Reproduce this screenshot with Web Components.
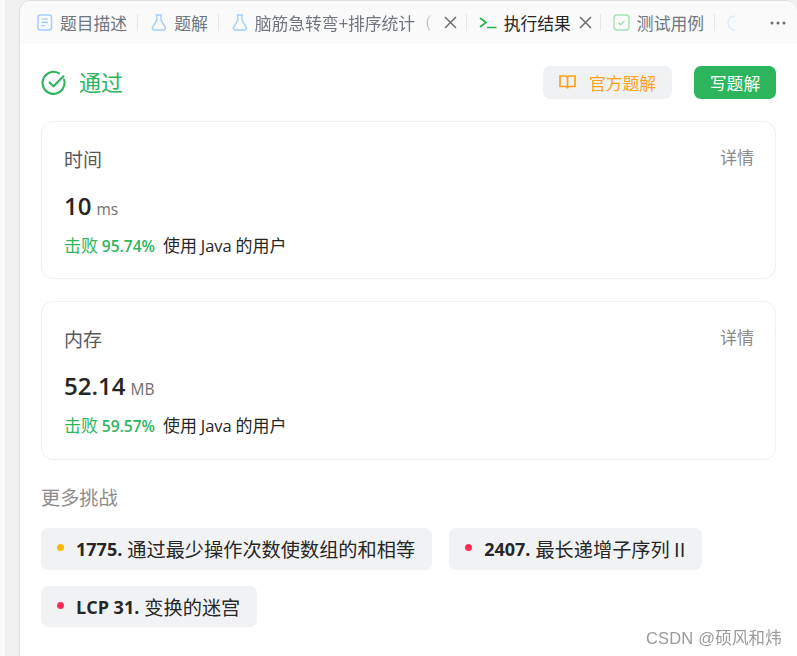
<!DOCTYPE html>
<html><head><meta charset="utf-8">
<style>
html,body{margin:0;padding:0;height:100%;overflow:hidden;background:#f0f0f0}
body{font-family:"Noto Sans CJK SC","Open Sans",sans-serif;}
</style></head><body>
<template id="t-app"><style>
:host{display:flex;height:656px;width:797px;box-sizing:border-box;padding-left:5px;background:linear-gradient(90deg,#fbfbfb 5px,#f0f0f0 5px)}
.panel{margin-left:14px;flex:1;background:#fff;border:1px solid #dfdfdf;border-width:1px 0 0 1px;border-top-left-radius:12px;border-top-right-radius:12px;overflow:hidden;display:flex;flex-direction:column;min-width:0}
.body{padding:0 21px 0 21px;display:flex;flex-direction:column}
</style><div class="panel"><slot name="tabs"></slot><div class="body"><slot></slot></div></div></template>
<script>
const ICONS={
doc:'<svg width="16" height="17" viewBox="0 0 16 17" fill="none" stroke="#a5cdfb" stroke-width="1.5"><rect x="1" y="1" width="13.500" height="15" rx="2.500"/><path d="M4.500 5h6.500M4.500 8.300h6.500M4.500 11.600h3.500" stroke="#9cc5f5" stroke-width="1.200"/></svg>',
flask:'<svg width="16" height="17" viewBox="0 0 16 17" fill="none" stroke="#a5cdfb" stroke-width="1.400"><path d="M4.800 1h6.200M5.800 1v5L1.500 13.600c-.6 1.200.1 2.400 1.400 2.400h10c1.300 0 2-1.200 1.400-2.400L10 6V1"/></svg>',
term:'<svg width="18" height="12" viewBox="0 0 18 12" fill="none" stroke="#1fb84d" stroke-width="1.700"><path d="M1 1l6 4.500-6 4.500"/><path d="M8 10.500h9.500"/></svg>',
check:'<svg width="17" height="17" viewBox="0 0 17 17" fill="none"><rect x="1" y="1" width="15" height="15" rx="3" stroke="#a5e4b4" stroke-width="1.400"/><path d="M5.500 8.800l2.200 1.900 3.800-3.800" stroke="#8fd9a4" stroke-width="1.200"/></svg>',
clock:'<svg width="12" height="16" viewBox="0 0 12 16" fill="none" stroke="#dcecfd" stroke-width="1.500"><path d="M9 1A7 7 0 0 0 9 15"/><path d="M9 5v3.500" stroke="#eef5fe"/></svg>'
};
function def(name,tpl){customElements.define(name,class extends HTMLElement{connectedCallback(){if(this.shadowRoot)return;const r=this.attachShadow({mode:'open'});if(typeof tpl==='string'&&tpl[0]==='#'){r.appendChild(document.querySelector(tpl).content.cloneNode(true))}else{r.innerHTML=tpl(this)}}})}
def('app-shell','#t-app');
def('tab-item',h=>`<style>
:host{display:flex;align-items:center;height:100%;flex:none;position:relative;font:16.800px/20px "Noto Sans CJK SC",sans-serif;color:${h.hasAttribute('active')?'#262626':'#6f7680'}}
.i{display:flex;margin-right:${h.getAttribute('gap')||7}px}
.x{margin-left:${h.getAttribute('xgap')||6}px;display:flex}
.t{white-space:nowrap;overflow:hidden;display:block;${h.getAttribute('w')?`width:${h.getAttribute('w')}px;-webkit-mask-image:linear-gradient(90deg,#000 92%,transparent);mask-image:linear-gradient(90deg,#000 92%,transparent)`:''}}
</style><span class="i">${ICONS[h.getAttribute('icon')]||''}</span><span class="t"><slot></slot></span>${h.hasAttribute('close')?'<span class="x"><svg width="13" height="13" viewBox="0 0 13 13" stroke="#6e6e6e" stroke-width="1.500"><path d="M1 1l11 11M12 1L1 12"/></svg></span>':''}`);
def('tab-sep',h=>`<style>:host{display:block;flex:none;width:1px;height:17px;background:#e6e6e6;margin:0 ${h.getAttribute('mr')||13}px 0 ${h.getAttribute('ml')||10}px}</style>`);
def('tab-bar',h=>`<style>:host{display:flex;align-items:center;height:43px;background:#fafafa;padding-left:17px;overflow:hidden;position:relative}
.more{position:absolute;right:11px;top:0;height:100%;display:flex;align-items:center;background:#fafafa;padding-left:10px}</style><slot></slot><span class="more"><svg width="16" height="4" viewBox="0 0 16 4" fill="#6e6e6e"><circle cx="2" cy="2" r="1.500"/><circle cx="8" cy="2" r="1.500"/><circle cx="14" cy="2" r="1.500"/></svg></span>`);
def('result-head',h=>`<style>:host{display:flex;align-items:center;height:45px;margin-top:16px}
.ok{display:flex;align-items:center;gap:12px;color:#2db55d;font-size:22px;line-height:30px;flex:1}
.ok span{margin-top:-3px}
.a{display:flex;align-items:center;justify-content:center;height:33px;border-radius:7px;font-size:16.800px}
.o{width:129px;background:#f0f1f3;color:#ffa116;gap:13px;margin-right:22px}
.w{width:82px;background:#2db55d;color:#fff}</style>
<div class="ok"><svg width="26" height="26" viewBox="0 0 26 26" fill="none" stroke="#2db55d" stroke-width="2.100" stroke-linecap="round"><path d="M23 9.500A11 11 0 1 1 18 3.300"/><path d="M8.500 12.500l4 3.800 10-10"/></svg><span><slot></slot></span></div>
<div class="a o"><svg width="17" height="15" viewBox="0 0 17 15" fill="none" stroke="#ffa116" stroke-width="1.700"><path d="M8.500 3C8.500 1.800 7.500 1 6.500 1H1v10.500h5.500c1 0 2 .7 2 2 0-1.300 1-2 2-2H16V1h-5.500c-1 0-2 .8-2 2v10.500"/></svg><span>官方题解</span></div><div class="a w">写题解</div>`);
def('stat-card',h=>`<style>:host{display:block;box-sizing:border-box;height:${h.getAttribute('h')||158}px;border:1px solid #f0f0f0;border-radius:12px;padding:25px 21px 0 22px;position:relative;margin-top:${h.getAttribute('mt')||0}px}
.top{display:flex;justify-content:space-between;font-size:19px;line-height:24px;color:#595959}
.d{font-size:17px;color:#8c8c8c;line-height:24px;margin-top:-2px}
.v{margin-top:17px;display:flex;align-items:baseline;gap:5px;color:#262626;line-height:36px}
.n{font:600 24px/36px "Open Sans",sans-serif}
.u{font:15.500px/36px "Open Sans",sans-serif;color:#6e6e6e}
.s{margin-top:6px;font-size:17px;line-height:24px;display:flex;color:#262626;gap:8px}
.g{color:#2db55d}.g b{font:600 15.500px/24px "Open Sans",sans-serif}</style>
<div class="top"><span>${h.getAttribute('label')}</span><span class="d">详情</span></div>
<div class="v"><span class="n">${h.getAttribute('value')}</span><span class="u">${h.getAttribute('unit')}</span></div>
<div class="s"><span class="g">击败 <b>${h.getAttribute('pct')}</b></span><span>使用 <span style="font-family:'Open Sans',sans-serif;font-size:16.500px">Java</span> 的用户</span></div>`);
def('section-title',h=>`<style>:host{display:block;margin-top:24px;font-size:19.200px;line-height:26px;color:#8c8c8c}</style><slot></slot>`);
def('chip-row',h=>`<style>:host{display:flex;flex-wrap:wrap;gap:16px 17px;margin-top:18px}</style><slot></slot>`);
def('challenge-chip',h=>`<style>:host{display:flex;align-items:center;height:${h.getAttribute('h')||42}px;background:#f1f2f4;border-radius:7px;padding:0 17px 0 16px;color:#262626;font-size:19.200px}
i{width:7px;height:7px;border-radius:50%;background:${h.getAttribute('dot')};margin-right:12px;margin-top:-3px;flex:none}
b{font:700 18px/24px "Open Sans",sans-serif;margin-right:5px}</style><i></i><b>${h.getAttribute('num')}</b><span><slot></slot></span>`);
def('wm-mark',h=>`<style>:host{position:fixed;right:15px;bottom:7px;font:16.500px/22px "Liberation Sans","Noto Sans CJK SC",sans-serif;color:#9a9a9a;letter-spacing:.2px}</style><slot></slot>`);
</script>
<app-shell>
<tab-bar slot="tabs">
<tab-item icon="doc">题目描述</tab-item><tab-sep></tab-sep>
<tab-item icon="flask">题解</tab-item><tab-sep></tab-sep>
<tab-item icon="flask" close w="179" xgap="10">脑筋急转弯+排序统计（</tab-item><tab-sep ml="9" mr="12"></tab-sep>
<tab-item icon="term" active close xgap="8">执行结果</tab-item><tab-sep ml="8" mr="12"></tab-sep>
<tab-item icon="check">测试用例</tab-item><tab-sep ml="10" mr="11"></tab-sep>
<tab-item icon="clock"></tab-item>
</tab-bar>
<result-head>通过</result-head>
<stat-card mt="16" label="时间" value="10" unit="ms" pct="95.74%"></stat-card>
<stat-card mt="22" h="159" label="内存" value="52.14" unit="MB" pct="59.57%"></stat-card>
<section-title>更多挑战</section-title>
<chip-row>
<challenge-chip dot="#ffb800" num="1775.">通过最少操作次数使数组的和相等</challenge-chip>
<challenge-chip dot="#ff2d55" num="2407.">最长递增子序列 II</challenge-chip>
<challenge-chip dot="#ff2d55" num="LCP 31." h="41">变换的迷宫</challenge-chip>
</chip-row>
</app-shell>
<wm-mark>CSDN @硕风和炜</wm-mark>
</body></html>
